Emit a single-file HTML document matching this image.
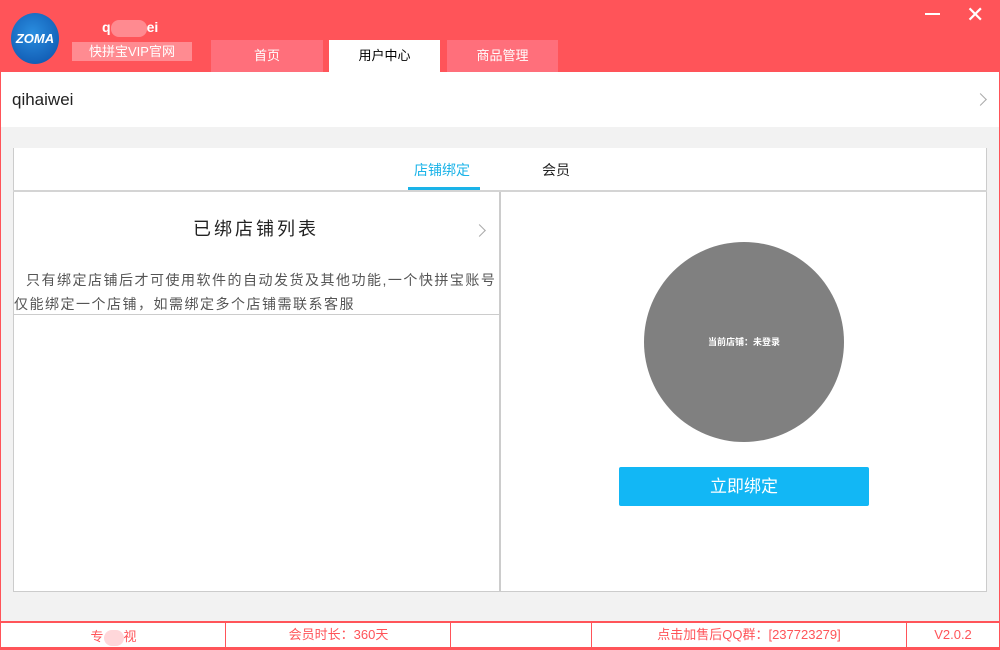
<!DOCTYPE html><html><head><meta charset="utf-8"><style>
*{margin:0;padding:0;box-sizing:border-box}
body{width:1000px;height:650px;position:relative;overflow:hidden;background:#f2f2f2;font-family:"Liberation Sans","Noto Sans CJK SC",sans-serif}
.a{position:absolute}
.tab{position:absolute;top:40px;height:32px;background:#ff6f7b;color:#fff;font-size:13px;text-align:center;line-height:32px}
.chev{position:absolute;width:9px;height:9px;border-right:1.5px solid #aaa;border-top:1.5px solid #aaa;transform:rotate(45deg)}
</style></head><body>
<div class="a" style="left:0;top:0;width:1000px;height:72px;background:#ff5459"></div>
<div class="a" style="left:11px;top:13px;width:48px;height:51px;border-radius:50%;background:radial-gradient(circle at 45% 40%,#2a8ee0,#0b4fa8);color:#fff;font-weight:bold;font-style:italic;font-size:13px;text-align:center;line-height:51px">ZOMA</div>
<div class="a" style="left:102px;top:19px;color:#fff;font-weight:bold;font-size:14px">q<span style="display:inline-block;width:36px;height:17px;background:#ff8a90;border-radius:8px;vertical-align:middle"></span>ei</div>
<div class="a" style="left:72px;top:42px;width:120px;height:19px;background:#ff8b91;color:#fff;font-size:13px;text-align:center;line-height:19px">快拼宝VIP官网</div>
<div class="tab" style="left:211px;width:112px">首页</div>
<div class="tab" style="left:329px;width:111px;background:#fff;color:#000">用户中心</div>
<div class="tab" style="left:447px;width:111px">商品管理</div>
<div class="a" style="left:925px;top:13px;width:15px;height:2px;background:#fff"></div>
<div class="a" style="left:966px;top:2px;color:#fff;font-size:22px">✕</div>
<div class="a" style="left:0;top:72px;width:1px;height:578px;background:#ff5459"></div>
<div class="a" style="left:999px;top:72px;width:1px;height:578px;background:#ff5459"></div>
<div class="a" style="left:1px;top:72px;width:998px;height:55px;background:#fff"></div>
<div class="a" style="left:12px;top:90px;font-size:17px;color:#222">qihaiwei</div>
<div class="chev" style="left:976px;top:95px"></div>
<div class="a" style="left:13px;top:148px;width:974px;height:444px;background:#fff;border:1px solid #ccc;border-top:none"></div>
<div class="a" style="left:13px;top:190px;width:974px;height:2px;background:#d4d4d4"></div>
<div class="a" style="left:414px;top:160px;font-size:14px;color:#1ab3e8">店铺绑定</div>
<div class="a" style="left:408px;top:187px;width:72px;height:3px;background:#1ab3e8"></div>
<div class="a" style="left:542px;top:160px;font-size:14px;color:#222">会员</div>
<div class="a" style="left:499px;top:192px;width:2px;height:400px;background:#ccc"></div>
<div class="a" style="left:193px;top:215px;font-size:18px;color:#222;letter-spacing:3px">已绑店铺列表</div>
<div class="chev" style="left:475px;top:226px"></div>
<div class="a" style="left:14px;top:268px;width:486px;font-size:14px;color:#555;line-height:24px;letter-spacing:1.5px;text-indent:12px">只有绑定店铺后才可使用软件的自动发货及其他功能,一个快拼宝账号仅能绑定一个店铺，如需绑定多个店铺需联系客服</div>
<div class="a" style="left:13px;top:314px;width:486px;height:1px;background:#ccc"></div>
<div class="a" style="left:644px;top:242px;width:200px;height:200px;border-radius:50%;background:#808080;color:#fff;font-size:9px;font-weight:bold;text-align:center;line-height:200px">当前店铺：未登录</div>
<div class="a" style="left:619px;top:467px;width:250px;height:39px;background:#12b7f5;color:#fff;font-size:17px;text-align:center;line-height:39px;border-radius:2px">立即绑定</div>
<div class="a" style="left:0;top:621px;width:1000px;height:29px;background:#fff;border:1px solid #ff5459;border-top-width:2px;border-bottom:3px solid #ff5459;font-size:13px;color:#ff5459">
<div class="a" style="left:0;width:225px;text-align:center;top:3px">专<span style="display:inline-block;width:20px;height:16px;background:#ffd7da;border-radius:8px;vertical-align:middle"></span>视</div>
<div class="a" style="left:224px;width:226px;height:24px;border-left:1px solid #ff5459;text-align:center;top:0;line-height:24px">会员时长：360天</div>
<div class="a" style="left:449px;width:141px;height:24px;border-left:1px solid #ff5459;top:0"></div>
<div class="a" style="left:590px;width:315px;height:24px;border-left:1px solid #ff5459;text-align:center;top:0;line-height:24px">点击加售后QQ群：[237723279]</div>
<div class="a" style="left:905px;width:93px;height:24px;border-left:1px solid #ff5459;text-align:center;top:0;line-height:24px">V2.0.2</div>
</div>
</body></html>
